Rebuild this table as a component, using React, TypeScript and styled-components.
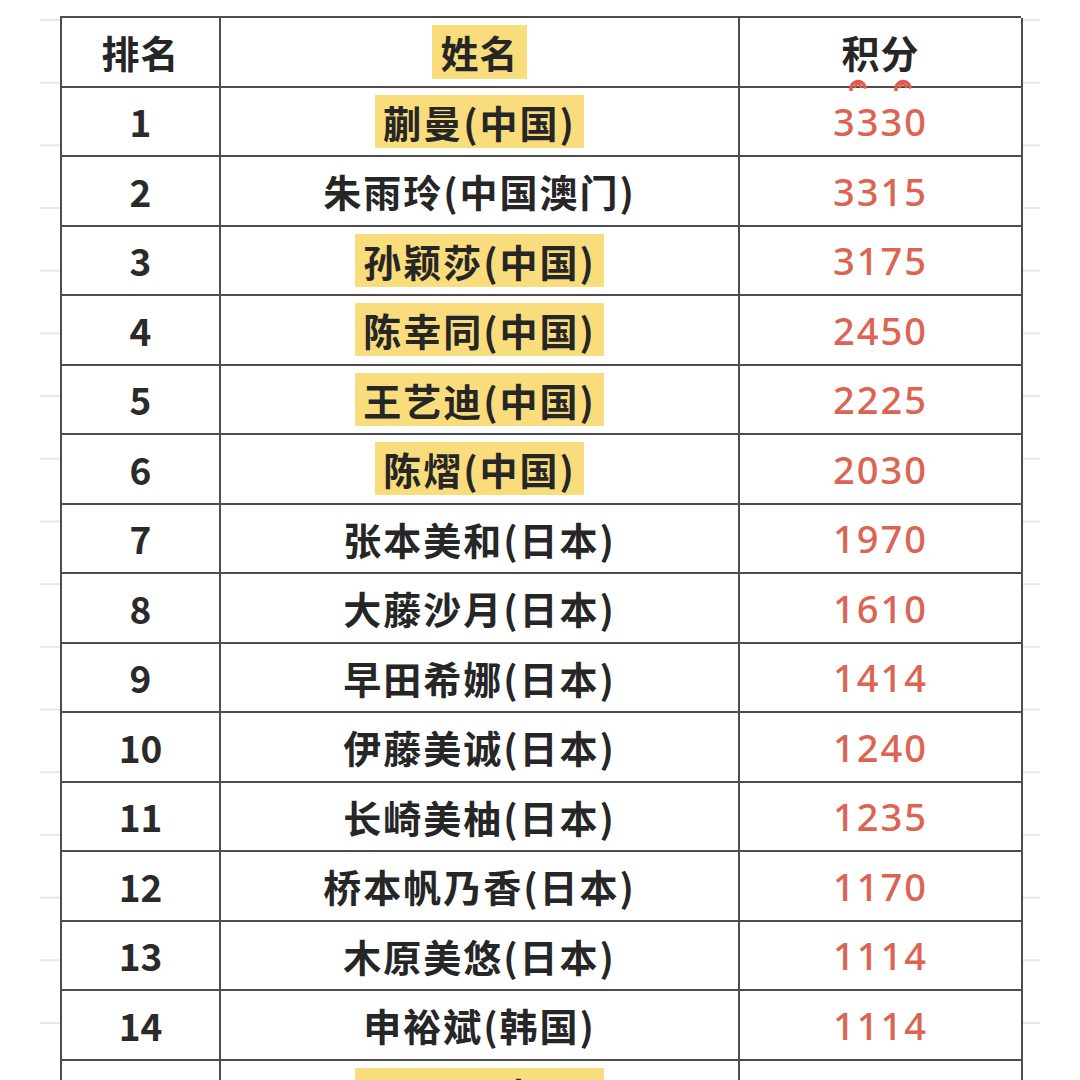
import { Fragment } from "react";
import styled, { createGlobalStyle } from "styled-components";

const GlobalStyle = createGlobalStyle`
  html, body {
    margin: 0;
    padding: 0;
    background: #ffffff;
    overflow: hidden;
  }
  body {
    width: 1080px;
    height: 1080px;
    font-family: "Noto Sans CJK SC", "Noto Sans", sans-serif;
  }
`;

const Paper = styled.div`
  margin-left: 40px;
  width: 1000px;
  height: 1080px;
  padding: 16px 19px 0 20px;
  box-sizing: border-box;
  background-image: linear-gradient(to bottom, #e8e8e8 2px, transparent 2px);
  background-size: 100% 62.7px;
  background-position: 0 19px;
  background-repeat: repeat-y;
`;

const Table = styled.div`
  display: grid;
  grid-template-columns: 159px 519px 283px;
  grid-auto-rows: 69.5px;
  background: #ffffff;
  border-top: 2px solid #4d4d4d;
  border-left: 2px solid #4d4d4d;
  width: 961px;
  box-sizing: border-box;
`;

const Cell = styled.div`
  position: relative;
  display: flex;
  align-items: center;
  justify-content: center;
  border-right: 2px solid #4d4d4d;
  border-bottom: 2px solid #4d4d4d;
  box-sizing: border-box;
`;

const HeadText = styled.span<{ $mark?: boolean }>`
  font-family: "Noto Sans CJK SC", sans-serif;
  font-weight: 700;
  font-size: 38px;
  line-height: 46px;
  color: #262626;
  padding: 4px 8px;
  letter-spacing: 1px;
  background: ${(p) => (p.$mark ? "#f9dd7c" : "transparent")};
`;

const Rank = styled.span`
  font-family: "Noto Sans CJK SC", sans-serif;
  font-weight: 600;
  font-size: 37px;
  color: #2a2a2a;
  letter-spacing: 0px;
`;

const Name = styled.span<{ $mark?: boolean }>`
  font-family: "Noto Sans CJK SC", sans-serif;
  font-weight: 700;
  font-size: 38px;
  line-height: 45px;
  color: #262626;
  padding: 4px 8px;
  letter-spacing: 2px;
  background: ${(p) => (p.$mark ? "#f9dd7c" : "transparent")};
`;

const Score = styled.span`
  font-family: "Noto Sans", sans-serif;
  font-weight: 500;
  font-size: 38px;
  color: #dc6452;
  letter-spacing: 2px;
`;

const Curls = styled.svg`
  position: absolute;
  left: 108px;
  bottom: -5px;
`;

type Player = { rank: number; name: string; score: number; mark?: boolean };

const players: Player[] = [
  { rank: 1, name: "蒯曼(中国)", score: 3330, mark: true },
  { rank: 2, name: "朱雨玲(中国澳门)", score: 3315 },
  { rank: 3, name: "孙颖莎(中国)", score: 3175, mark: true },
  { rank: 4, name: "陈幸同(中国)", score: 2450, mark: true },
  { rank: 5, name: "王艺迪(中国)", score: 2225, mark: true },
  { rank: 6, name: "陈熠(中国)", score: 2030, mark: true },
  { rank: 7, name: "张本美和(日本)", score: 1970 },
  { rank: 8, name: "大藤沙月(日本)", score: 1610 },
  { rank: 9, name: "早田希娜(日本)", score: 1414 },
  { rank: 10, name: "伊藤美诚(日本)", score: 1240 },
  { rank: 11, name: "长崎美柚(日本)", score: 1235 },
  { rank: 12, name: "桥本帆乃香(日本)", score: 1170 },
  { rank: 13, name: "木原美悠(日本)", score: 1114 },
  { rank: 14, name: "申裕斌(韩国)", score: 1114 },
  { rank: 15, name: "王曼昱(中国)", score: 1100, mark: true },
];

export default function App() {
  return (
    <>
      <GlobalStyle />
      <Paper>
        <Table>
          <Cell>
            <HeadText>排名</HeadText>
          </Cell>
          <Cell>
            <HeadText $mark>姓名</HeadText>
          </Cell>
          <Cell>
            <HeadText>积分</HeadText>
            <Curls width="66" height="16" viewBox="0 0 66 16">
              <path d="M3 15 C2 6 14 3 17 12" stroke="#e05a4c" strokeWidth="3.5" fill="none" strokeLinecap="round" />
              <path d="M7 12 C8 8 12 8 13 12" stroke="#e05a4c" strokeWidth="2.5" fill="none" strokeLinecap="round" />
              <path d="M48 15 C47 6 59 3 62 12" stroke="#e05a4c" strokeWidth="3.5" fill="none" strokeLinecap="round" />
              <path d="M52 12 C53 8 57 8 58 12" stroke="#e05a4c" strokeWidth="2.5" fill="none" strokeLinecap="round" />
            </Curls>
          </Cell>
          {players.map((p) => (
            <Fragment key={p.rank}>
              <Cell>
                <Rank>{p.rank}</Rank>
              </Cell>
              <Cell>
                <Name $mark={p.mark}>{p.name}</Name>
              </Cell>
              <Cell>
                <Score>{p.score}</Score>
              </Cell>
            </Fragment>
          ))}
        </Table>
      </Paper>
    </>
  );
}
